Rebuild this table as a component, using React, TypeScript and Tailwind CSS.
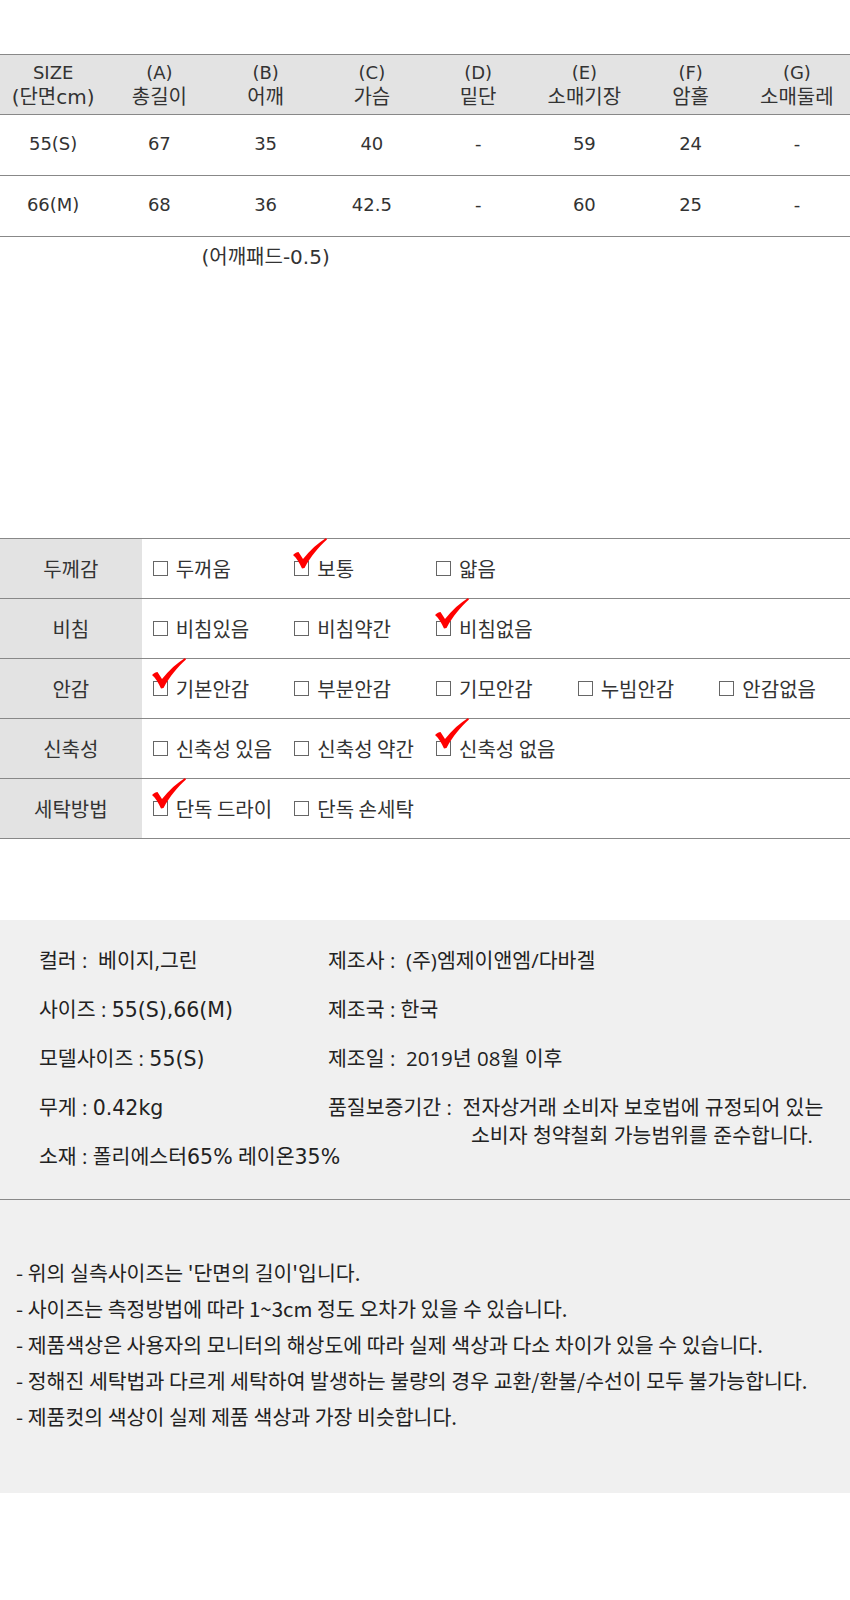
import React from 'react';

const sizeHeaders = [
  ['SIZE', '(단면cm)'],
  ['(A)', '총길이'],
  ['(B)', '어깨'],
  ['(C)', '가슴'],
  ['(D)', '밑단'],
  ['(E)', '소매기장'],
  ['(F)', '암홀'],
  ['(G)', '소매둘레'],
];

const sizeRows = [
  ['55(S)', '67', '35', '40', '-', '59', '24', '-'],
  ['66(M)', '68', '36', '42.5', '-', '60', '25', '-'],
];

const features: { label: string; options: string[]; checked: number }[] = [
  { label: '두께감', options: ['두꺼움', '보통', '얇음'], checked: 1 },
  { label: '비침', options: ['비침있음', '비침약간', '비침없음'], checked: 2 },
  { label: '안감', options: ['기본안감', '부분안감', '기모안감', '누빔안감', '안감없음'], checked: 0 },
  { label: '신축성', options: ['신축성 있음', '신축성 약간', '신축성 없음'], checked: 2 },
  { label: '세탁방법', options: ['단독 드라이', '단독 손세탁'], checked: 0 },
];

const notes = [
  "- 위의 실측사이즈는 '단면의 길이'입니다.",
  '- 사이즈는 측정방법에 따라 1~3cm 정도 오차가 있을 수 있습니다.',
  '- 제품색상은 사용자의 모니터의 해상도에 따라 실제 색상과 다소 차이가 있을 수 있습니다.',
  '- 정해진 세탁법과 다르게 세탁하여 발생하는 불량의 경우 교환/환불/수선이 모두 불가능합니다.',
  '- 제품컷의 색상이 실제 제품 색상과 가장 비슷합니다.',
];

function CheckMark() {
  return (
    <svg
      className="absolute left-[-2px] top-[-24px]"
      width="34"
      height="31"
      viewBox="0 0 34 31"
    >
      <path
        d="M0 17 C2 15 4 14 5.5 14 L10 21 C17 12 25 5 33 0 L34 1.5 C26 8.5 18 18 11.5 30 L9 30.5 C6.5 25 3.5 20 0 17 Z"
        fill="#ff0000"
      />
    </svg>
  );
}

function Option({ text, checked }: { text: string; checked: boolean }) {
  return (
    <div className="flex items-center pl-[11px]">
      <span className="relative inline-block w-[15px] h-[15px] border border-[#666] bg-white shrink-0">
        {checked && <CheckMark />}
      </span>
      <span className="ml-[8px] whitespace-nowrap">{text}</span>
    </div>
  );
}

// latin values on the left side of the info box render wider
function Num({ children }: { children: React.ReactNode }) {
  return <span className="font-['DejaVu_Sans',sans-serif] leading-none">{children}</span>;
}

export default function App() {
  return (
    <div className="w-[850px] bg-white text-[#333] pt-[54px]">
      {/* size table */}
      <div className="font-['DejaVu_Sans','Noto_Sans_CJK_KR',sans-serif] text-[18px]">
        <div className="grid grid-cols-8 h-[61px] bg-[#e3e3e3] border-y border-[#888] items-center text-center leading-[24px]">
          {sizeHeaders.map(([a, b]) => (
            <div key={a}>
              <div>{a}</div>
              <div className="text-[20px]">{b}</div>
            </div>
          ))}
        </div>
        {sizeRows.map((row) => (
          <div key={row[0]} className="grid grid-cols-8 h-[61px] border-b border-[#888] items-center text-center">
            {row.map((v, i) => (
              <div key={i} className="pb-[4px]">{v}</div>
            ))}
          </div>
        ))}
        <div className="grid grid-cols-8 mt-[8px] leading-[24px] text-[20px]">
          <div className="col-start-2 col-span-3 text-center">(어깨패드-0.5)</div>
        </div>
      </div>

      {/* fabric table */}
      <div className="mt-[269px] border-t border-[#888] font-['Noto_Sans_CJK_KR',sans-serif] text-[20px]">
        {features.map((f) => (
          <div key={f.label} className="grid grid-cols-6 h-[60px] border-b border-[#888]">
            <div className="bg-[#e3e3e3] flex items-center justify-center">{f.label}</div>
            {f.options.map((o, i) => (
              <Option key={o} text={o} checked={i === f.checked} />
            ))}
          </div>
        ))}
      </div>

      {/* product info */}
      <div className="mt-[81px] bg-[#f0f0f0] border-b border-[#888] pt-[26px] pb-[29px] flex font-['Open_Sans','Noto_Sans_CJK_KR',sans-serif] text-[20.5px] text-[#222] leading-[28px] whitespace-pre">
        <div className="w-[328px] pl-[39px] flex flex-col gap-[21px]">
          <div className="h-[28px]">컬러 :  베이지,그린</div>
          <div className="h-[28px]">사이즈 : <Num>55(S),66(M)</Num></div>
          <div className="h-[28px]">모델사이즈 : <Num>55(S)</Num></div>
          <div className="h-[28px]">무게 : <Num>0.42kg</Num></div>
          <div className="h-[28px]">소재 : 폴리에스터<Num>65%</Num> 레이온<Num>35%</Num></div>
        </div>
        <div className="flex flex-col gap-[21px]">
          <div>제조사 :  (주)엠제이앤엠/다바겔</div>
          <div>제조국 : 한국</div>
          <div>제조일 :  2019년 08월 이후</div>
          <div>
            <div>품질보증기간 :  전자상거래 소비자 보호법에 규정되어 있는</div>
            <div className="pl-[143px]">소비자 청약철회 가능범위를 준수합니다.</div>
          </div>
        </div>
      </div>

      {/* notes */}
      <div className="bg-[#f0f0f0] pt-[54px] pb-[59px] px-[16px] font-['Noto_Sans_CJK_KR',sans-serif] text-[20.5px] text-[#222] leading-[36px]">
        {notes.map((n) => (
          <div key={n}>{n}</div>
        ))}
      </div>
    </div>
  );
}
